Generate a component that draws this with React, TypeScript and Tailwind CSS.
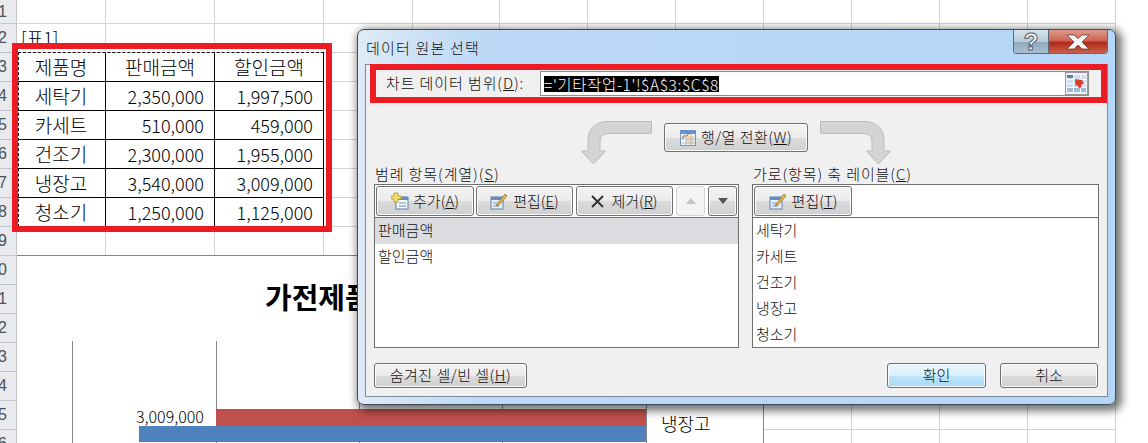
import React from 'react';

const rows = [1, 2, 3, 4, 5, 6, 7, 8, 9, 10, 11, 12, 13, 14, 15, 16];
const colCount = 12;

const tableData: Record<number, string[]> = {
  3: ['제품명', '판매금액', '할인금액'],
  4: ['세탁기', '2,350,000', '1,997,500'],
  5: ['카세트', '510,000', '459,000'],
  6: ['건조기', '2,300,000', '1,955,000'],
  7: ['냉장고', '3,540,000', '3,009,000'],
  8: ['청소기', '1,250,000', '1,125,000'],
};

const greyBg =
  'border-[#707070] bg-[linear-gradient(180deg,#f3f3f3_0%,#ebebeb_50%,#dcdcdc_50%,#cfcfcf_100%)]';
const blueBg =
  'border-[#3c7fb1] bg-[linear-gradient(180deg,#eaf6fd_0%,#d9f0fc_50%,#bee6fd_50%,#a7d9f5_100%)]';

const Btn: React.FC<{ className?: string; bg?: string; children: React.ReactNode }> = ({ className, bg, children }) => (
  <div
    className={`flex items-center justify-center whitespace-nowrap rounded-[3px] border shadow-[inset_0_0_0_1px_#fafafa] text-[15px] font-light text-[#111] ${bg ?? greyBg} ${className ?? ''}`}
  >
    {children}
  </div>
);

const CurveArrow: React.FC<{ flip?: boolean }> = ({ flip }) => (
  <svg width="71" height="44" viewBox="0 0 71 44" className={`shrink-0 ${flip ? '-scale-x-100' : ''}`}>
    <path
      d="M70.500 .5H28Q7 .5 7 21V30H.5L12.500 43 24.500 30H19V21Q19 12.500 28 12.500H70.500Z"
      fill="#d4d4d4"
      stroke="#bcbcbc"
    />
  </svg>
);

const AddIcon = () => (
  <svg width="18" height="18" viewBox="0 0 18 18" className="shrink-0">
    <rect x="5" y="5" width="12" height="12" fill="#f4f8fc" stroke="#5a7fa8" />
    <rect x="5" y="5" width="12" height="3" fill="#5f8fc4" />
    <path d="M8 11h7M8 14h7" stroke="#6a8db4" />
    <path d="M3 1h4v3h3v3H7v3H3V7H0V4h3z" fill="#f7df6e" stroke="#b9962b" strokeWidth=".8" />
  </svg>
);

const EditIcon = () => (
  <svg width="18" height="18" viewBox="0 0 18 18" className="shrink-0">
    <rect x="1" y="5" width="12" height="12" fill="#e8f0fa" stroke="#5c82b0" />
    <rect x="1" y="5" width="12" height="3" fill="#5f8fc4" />
    <path d="M3 11h5M3 14h6" stroke="#7a99bd" />
    <path d="M7 12 15 2l2 2-8 9-3 1z" fill="#e7b54c" stroke="#8a6a2a" strokeWidth=".7" />
  </svg>
);

const SwapIcon = () => (
  <svg width="16" height="16" viewBox="0 0 16 16" className="shrink-0">
    <rect x=".5" y=".5" width="15" height="15" fill="#eef4fb" stroke="#6f93bd" />
    <rect x="1" y="1" width="14" height="3" fill="#5f93d0" />
    <rect x="6" y="6" width="8" height="8" fill="#f6d3a6" />
    <path d="M1 9h14M1 13h14M6 4v11M11 4v11" stroke="#a9bfd8" strokeWidth=".8" />
    <path d="M3 9V6h3M9 3 7 6" stroke="#a4571f" fill="none" />
  </svg>
);

const RangeIcon = () => (
  <div className="flex h-[23px] w-[23px] shrink-0 items-center justify-center border border-[#9a9a9a] bg-[#eef1f5]">
    <svg width="19" height="17" viewBox="0 0 19 17">
      <rect width="19" height="17" fill="#cfdff2" />
      <rect width="6" height="3" fill="#5d7fa8" />
      <rect y="13" width="19" height="4" fill="#9fbbdc" />
      <path d="M0 4.500h19M0 8.500h19M0 12.500h19M6.500 0v17M13.500 0v17" stroke="#ffffff" />
      <path d="M8 4l7 1 2 4-3 .5.5 3-3 .5-1-3-2 1z" fill="#dc3b2c" />
    </svg>
  </div>
);

export default function App() {
  return (
    <div className="relative h-[443px] w-[1148px] overflow-hidden bg-white font-['Noto_Sans_CJK_KR',sans-serif] text-black">
      {/* sheet grid */}
      <div className="grid grid-cols-[17px_89px_109px_109px_89px_87px_88px_88px_88px_88px_88px_88px_88px] grid-rows-[24px_repeat(15,29px)]">
        {rows.map((r) => (
          <React.Fragment key={r}>
            <div className="flex items-center justify-end overflow-hidden whitespace-nowrap border-b border-r border-[#c3c6ca] bg-[#e8eaed] pr-[9px] font-['Liberation_Sans',sans-serif] text-[16px] text-[#4d5358]">
              {r}
            </div>
            {Array.from({ length: colCount }).map((_, c) => {
              const data = tableData[r];
              const inTable = data && c < 3;
              const centered = inTable && (c === 0 || r === 3);
              return (
                <div
                  key={c}
                  className={`overflow-visible whitespace-nowrap border-b border-r ${
                    inTable ? 'border-black' : 'border-[#d4d4d4]'
                  } ${
                    centered
                      ? 'flex items-center justify-center text-[19px] font-light'
                      : inTable
                        ? 'flex items-center justify-end pr-[10px] text-[18px] font-light'
                        : ''
                  }`}
                >
                  {inTable ? data[c] : r === 2 && c === 0 ? <span className="pl-[4px] text-[18px] font-light leading-[27px]">[표1]</span> : null}
                </div>
              );
            })}
          </React.Fragment>
        ))}
      </div>

      {/* copy marquee and red note */}
      <div className="absolute left-[18px] top-[52px] h-[175px] w-[306px] border border-dashed border-black" />
      <div className="absolute left-[12px] top-[43px] h-[189px] w-[320px] border-[6px] border-[#ed1c24]" />

      {/* chart */}
      <div className="absolute left-[17px] top-[255px] h-[188px] w-[747px] overflow-hidden border-r border-t border-[#868686] bg-white">
        <div className="pl-[248px] pt-[19px] text-[29px] font-bold leading-[42px]">가전제품</div>
        <svg width="746" height="188" viewBox="0 0 746 188" className="absolute left-0 top-0">
          <path d="M55.500 85V188M199.500 85V188M342.500 85V188M485.500 85V188M629.500 85V188" stroke="#868686" />
          <rect x="199" y="153" width="430" height="17" fill="#c0504d" />
          <rect x="122" y="170" width="507" height="16" fill="#4f81bd" />
          <text x="119" y="167" fontSize="16" fontWeight="300" fontFamily="Noto Sans CJK KR">3,009,000</text>
          <text x="644" y="175" fontSize="18" fontWeight="300" fontFamily="Noto Sans CJK KR">냉장고</text>
        </svg>
      </div>

      {/* dialog window */}
      <div className="absolute left-[357px] top-[29px] flex h-[376px] w-[759px] flex-col rounded-[7px] border border-[#3f4a55] bg-[linear-gradient(90deg,#dfebf6_0%,#bcd9f6_16%,#b4d6f8_100%)] px-[7px] pb-[7px] shadow-[3px_3px_8px_3px_rgba(0,0,0,0.55)]">
        <div className="flex h-[34px] shrink-0 items-start justify-between">
          <span className="pl-[1px] pt-[7px] text-[15px] font-light leading-[21px] tracking-[1.2px] text-[#111]">데이터 원본 선택</span>
          <div className="flex h-[24px] overflow-hidden rounded-b-[4px] border border-t-0 border-[#5e6a78]">
            <div className="flex w-[35px] items-center justify-center border-r border-[#5e6a78] bg-[linear-gradient(180deg,#d5e3ef_0%,#b9cad9_50%,#91a8bd_52%,#aabfd1_100%)]">
              <span className="font-['Liberation_Sans',sans-serif] text-[24px] font-bold leading-none text-white [-webkit-text-stroke:1px_#4e5a66]">?</span>
            </div>
            <div className="flex w-[58px] items-center justify-center bg-[linear-gradient(180deg,#dd9c8e_0%,#cf6553_45%,#b02a18_55%,#c9614c_100%)]">
              <svg width="24" height="16" viewBox="0 0 24 16">
                <path d="M1 1h7l4 3.500L16 1h7l-7 7 7 7h-7l-4-4-4 4H1l7-7z" fill="#f6f6f6" stroke="#6e3a33" strokeWidth=".8" />
              </svg>
            </div>
          </div>
        </div>

        <div className="flex min-h-0 flex-1 flex-col border border-[#7f8b98] bg-[#f0f0f0] text-[15px] font-light text-[#111]">
          {/* range row */}
          <div className="-mt-[1px] ml-[4px] flex h-[39px] shrink-0 items-center border-[6px] border-[#ed1c24] bg-[#f0f0f0]">
            <span className="w-[164px] shrink-0 whitespace-nowrap pl-[10px] tracking-[0.9px]">
              차트 데이터 범위(<u>D</u>):
            </span>
            <div className="flex h-[25px] w-[549px] items-center border border-[#8d8d8d] bg-white pl-[3px]">
              <span className="bg-black text-[15.500px] leading-[16px] tracking-[0.6px] text-white">='기타작업-1'!$A$3:$C$8</span>
              <div className="ml-auto">
                <RangeIcon />
              </div>
            </div>
          </div>

          {/* swap row */}
          <div className="mt-[18px] flex h-[44px] shrink-0 items-start gap-[12px] pl-[215px]">
            <CurveArrow />
            <Btn className="mt-[2px] h-[29px] w-[144px] gap-[5px]">
              <SwapIcon />
              <span className="tracking-[0.5px]">
                행/열 전환(<u>W</u>)
              </span>
            </Btn>
            <CurveArrow flip />
          </div>

          {/* series and category lists */}
          <div className="flex shrink-0 gap-[13px] pl-[8px]">
            <div className="w-[365px]">
              <div className="h-[19px] whitespace-nowrap pl-[1px] leading-[17px] tracking-[0.9px]">
                범례 항목(계열)(<u>S</u>)
              </div>
              <div className="h-[164px] border border-[#6f6f6f] bg-white">
                <div className="flex h-[33px] gap-[2px] border-b border-[#6f6f6f] pl-[1px] pt-[1px]">
                  <Btn className="h-[30px] w-[98px] gap-[4px]">
                    <AddIcon />
                    <span>
                      추가(<u>A</u>)
                    </span>
                  </Btn>
                  <Btn className="h-[30px] w-[97px] gap-[5px]">
                    <EditIcon />
                    <span>
                      편집(<u>E</u>)
                    </span>
                  </Btn>
                  <Btn className="ml-[1px] h-[30px] w-[97px] gap-[7px]">
                    <svg width="13" height="13" viewBox="0 0 13 13" className="shrink-0">
                      <path d="M1 1l11 11M12 1 1 12" stroke="#333" strokeWidth="2" />
                    </svg>
                    <span>
                      제거(<u>R</u>)
                    </span>
                  </Btn>
                  <div className="ml-[1px] flex h-[30px] w-[29px] items-center justify-center rounded-[3px] border border-[#d4d4d4] bg-[#f4f4f4]">
                    <svg width="10" height="6" viewBox="0 0 10 6">
                      <path d="M5 0l5 6H0z" fill="#c4c4c4" />
                    </svg>
                  </div>
                  <Btn className="ml-[1px] h-[30px] w-[29px]">
                    <svg width="10" height="6" viewBox="0 0 10 6">
                      <path d="M5 6l5-6H0z" fill="#555" />
                    </svg>
                  </Btn>
                </div>
                <div className="flex h-[26px] items-center bg-[#dcdde0] pb-[2px] pl-[3px]">판매금액</div>
                <div className="flex h-[26px] items-center pb-[2px] pl-[3px]">할인금액</div>
              </div>
            </div>
            <div className="w-[347px]">
              <div className="h-[19px] whitespace-nowrap pl-[1px] leading-[17px] tracking-[0.9px]">
                가로(항목) 축 레이블(<u>C</u>)
              </div>
              <div className="h-[164px] border border-[#6f6f6f] bg-white">
                <div className="flex h-[33px] border-b border-[#6f6f6f] pl-[1px] pt-[1px]">
                  <Btn className="h-[30px] w-[98px] gap-[5px]">
                    <EditIcon />
                    <span>
                      편집(<u>T</u>)
                    </span>
                  </Btn>
                </div>
                {['세탁기', '카세트', '건조기', '냉장고', '청소기'].map((t) => (
                  <div key={t} className="flex h-[26px] items-center pb-[2px] pl-[3px]">
                    {t}
                  </div>
                ))}
              </div>
            </div>
          </div>

          {/* bottom buttons */}
          <div className="mt-[15px] flex shrink-0 items-start pl-[8px] pr-[9px]">
            <Btn className="h-[25px] w-[153px]">
              <span className="tracking-[0.5px]">
                숨겨진 셀/빈 셀(<u>H</u>)
              </span>
            </Btn>
            <Btn className="ml-auto h-[25px] w-[99px]" bg={blueBg}>
              확인
            </Btn>
            <Btn className="ml-[14px] h-[25px] w-[98px]">취소</Btn>
          </div>
        </div>
      </div>
    </div>
  );
}
